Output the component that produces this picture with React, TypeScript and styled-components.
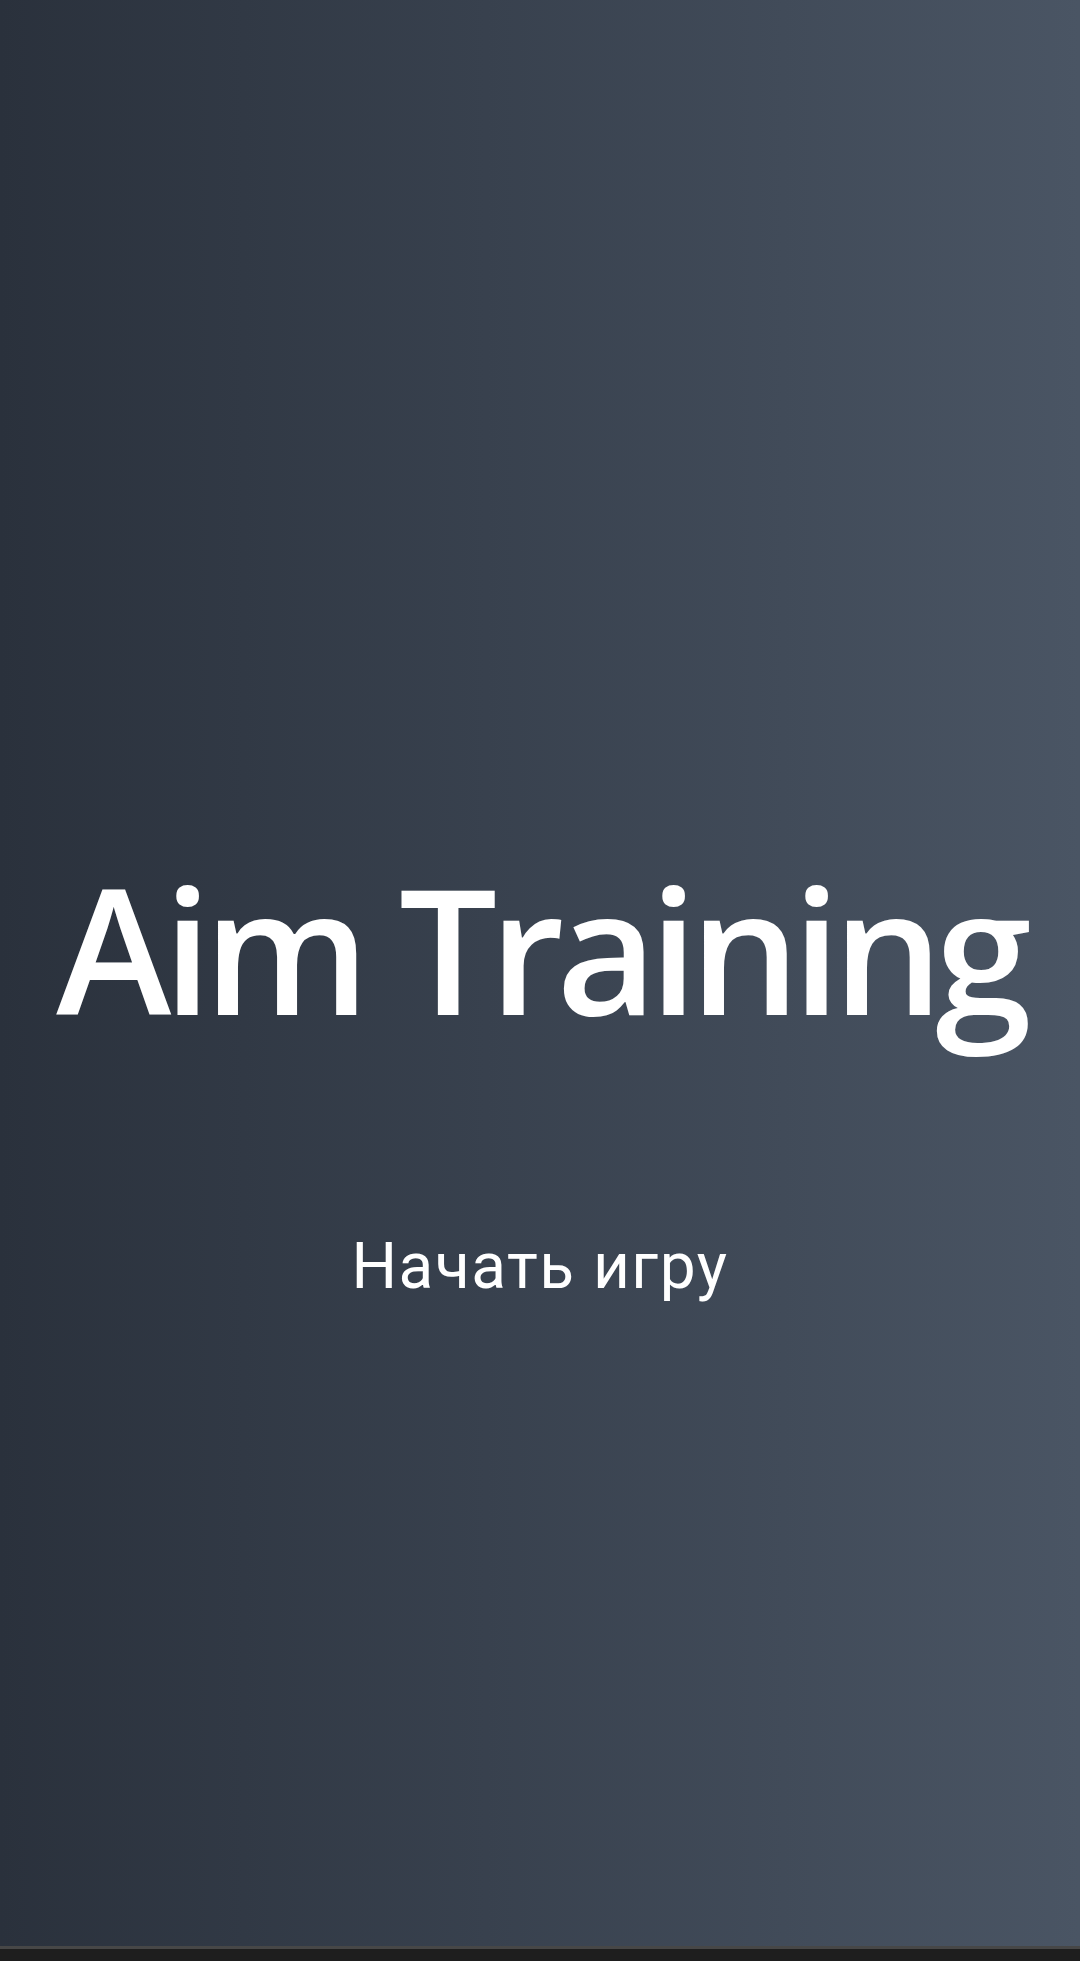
import React from "react";
import styled, { createGlobalStyle } from "styled-components";

const GlobalStyle = createGlobalStyle`
  html, body {
    margin: 0;
    padding: 0;
    background: #1e1e1e;
  }
  #root {
    width: 1080px;
  }
`;

const Page = styled.div`
  display: flex;
  flex-direction: column;
  width: 1080px;
  height: 1961px;
`;

const Screen = styled.main`
  flex: 1;
  display: flex;
  flex-direction: column;
  align-items: center;
  justify-content: center;
  padding-top: 213px;
  box-sizing: border-box;
  background: linear-gradient(to right, #2a313c 0%, #38414e 45%, #4a5564 100%);
`;

const Title = styled.h1`
  margin: 0;
  font-family: "Open Sans", "Noto Sans", sans-serif;
  font-weight: 620;
  font-size: 174px;
  letter-spacing: -8px;
  line-height: 1;
  color: #ffffff;
  white-space: nowrap;
`;

const StartButton = styled.button`
  margin-top: 200px;
  padding: 0;
  border: none;
  background: transparent;
  font-family: Roboto, "Noto Sans", sans-serif;
  font-weight: 400;
  font-size: 64px;
  letter-spacing: 1.5px;
  line-height: 1;
  color: #ffffff;
  cursor: pointer;
`;

const NavBar = styled.div`
  height: 12px;
  border-top: 3px solid #474747;
  background: #1e1e1e;
`;

export default function App() {
  return (
    <>
      <GlobalStyle />
      <Page>
        <Screen>
          <Title>Aim Training</Title>
          <StartButton type="button">Начать игру</StartButton>
        </Screen>
        <NavBar />
      </Page>
    </>
  );
}
